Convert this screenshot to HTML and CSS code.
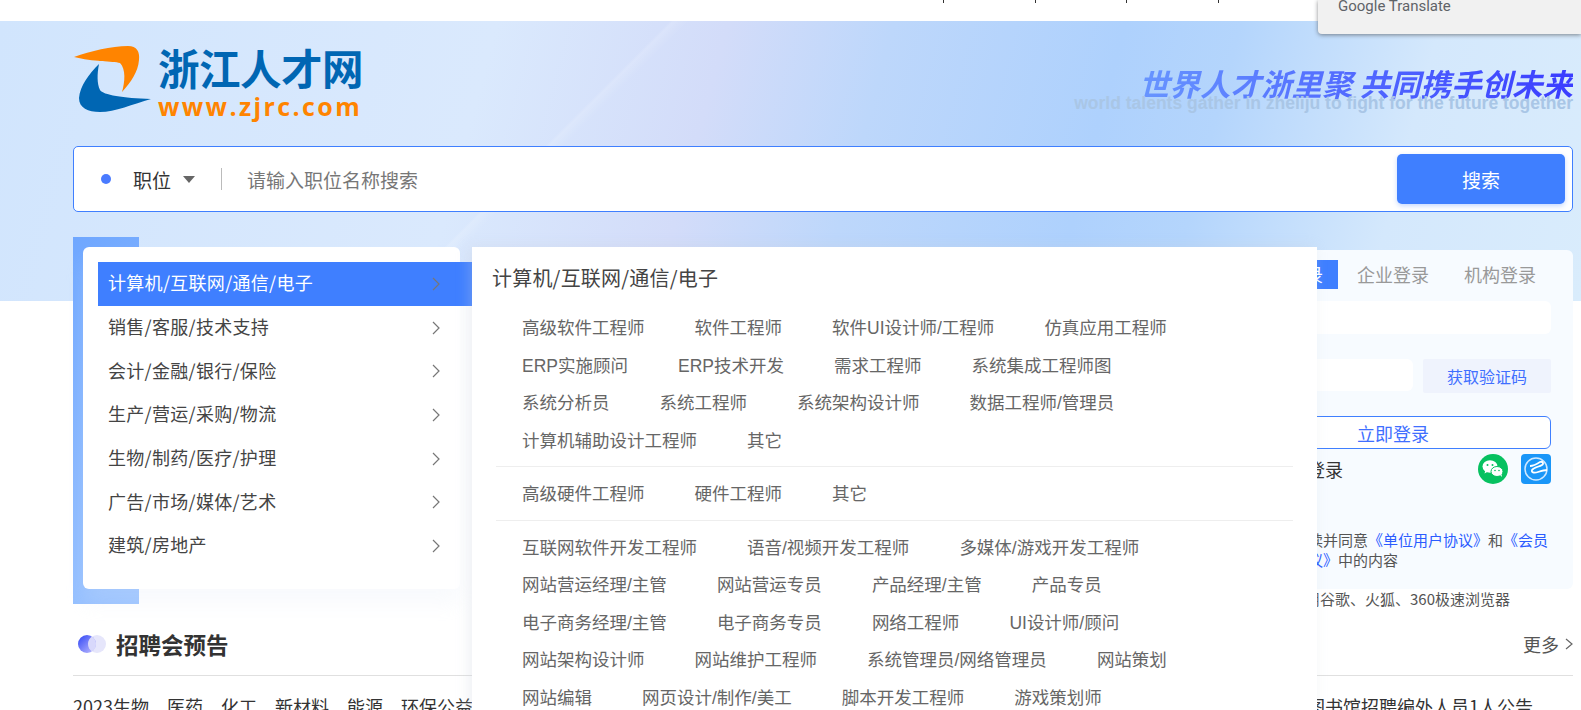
FILE: index.html
```html
<!DOCTYPE html>
<html lang="zh-CN">
<head>
    <meta charset="UTF-8">
    <title>浙江人才网</title>
    <link rel="stylesheet" href="styles.css">
</head>
<body>
<div class="topbar">
    <span class="tick"></span><span class="tick"></span><span class="tick"></span><span class="tick"></span>
</div>
<div class="translate-pop">Google Translate</div>

<!-- 顶部背景区 -->
<div class="hero">
    <div class="header">
        <a class="logo">
            <svg class="logo-mark" viewBox="0 0 80 66">
                <path fill="#ff8400" d="M1 11C18 5 38 0 55 0C64 0 67 6 66 14C65 26 58 36 49 46C52 36 53 23 47 17C40 15 20 16 1 11Z"/>
                <path fill="#0066b3" d="M26 18C24 28 24 38 27 44C30 49 50 52 78 53C60 58 42 66 27 66C15 66 6 62 6 52C7 40 16 28 26 18Z"/>
            </svg>
            <div class="logo-text">
                <div class="logo-cn">浙江人才网</div>
                <div class="logo-en">www.zjrc.com</div>
            </div>
        </a>
        <div class="slogan">
            <div class="slogan-cn">世界人才浙里聚 共同携手创未来</div>
            <div class="slogan-en">world talents gather in zheliju to fight for the future together</div>
        </div>
    </div>
    <form class="search-box">
        <span class="search-dot"></span>
        <span class="search-type">职位</span>
        <span class="search-caret"></span>
        <span class="search-line"></span>
        <input class="search-input" type="text" placeholder="请输入职位名称搜索">
        <button type="button" class="search-btn">搜索</button>
    </form>
</div>

<div class="main">
    <div class="top-row">
        <!-- 职位分类 -->
        <div class="cate-wrap">
            <ul class="cate-list">
                <li class="cate-item active">计算机/互联网/通信/电子<svg class="arrow" viewBox="0 0 8 14"><path d="M1 1l6 6-6 6"/></svg></li>
                <li class="cate-item">销售/客服/技术支持<svg class="arrow" viewBox="0 0 8 14"><path d="M1 1l6 6-6 6"/></svg></li>
                <li class="cate-item">会计/金融/银行/保险<svg class="arrow" viewBox="0 0 8 14"><path d="M1 1l6 6-6 6"/></svg></li>
                <li class="cate-item">生产/营运/采购/物流<svg class="arrow" viewBox="0 0 8 14"><path d="M1 1l6 6-6 6"/></svg></li>
                <li class="cate-item">生物/制药/医疗/护理<svg class="arrow" viewBox="0 0 8 14"><path d="M1 1l6 6-6 6"/></svg></li>
                <li class="cate-item">广告/市场/媒体/艺术<svg class="arrow" viewBox="0 0 8 14"><path d="M1 1l6 6-6 6"/></svg></li>
                <li class="cate-item">建筑/房地产<svg class="arrow" viewBox="0 0 8 14"><path d="M1 1l6 6-6 6"/></svg></li>
            </ul>
        </div>

        <!-- 登录框 -->
        <div class="login-col">
            <div class="login-box">
                <div class="login-tabs">
                    <span class="login-tab active">个人登录</span>
                    <span class="login-tab">企业登录</span>
                    <span class="login-tab">机构登录</span>
                </div>
                <div class="login-field"></div>
                <div class="code-row">
                    <div class="login-field code-field"></div>
                    <button type="button" class="code-btn">获取验证码</button>
                </div>
                <button type="button" class="login-btn">立即登录</button>
                <div class="other-row">
                    <span class="other-text">其他方式登录</span>
                    <svg class="other-icon wechat" viewBox="0 0 30 30">
                        <circle cx="15" cy="15" r="15" fill="#07c160"/>
                        <ellipse cx="12" cy="12.5" rx="7.5" ry="6.2" fill="#fff"/>
                        <path fill="#fff" d="M7.5 16l-1 3.5 3.5-2z"/>
                        <ellipse cx="19" cy="17.5" rx="6" ry="5" fill="#fff" stroke="#07c160"/>
                        <path fill="#fff" d="M22 21l2 2-.5-3z"/>
                        <circle cx="9.5" cy="11" r="1" fill="#07c160"/>
                        <circle cx="14.5" cy="11" r="1" fill="#07c160"/>
                        <circle cx="17" cy="16.5" r=".8" fill="#07c160"/>
                        <circle cx="21" cy="16.5" r=".8" fill="#07c160"/>
                    </svg>
                    <svg class="other-icon" viewBox="0 0 30 30">
                        <rect width="30" height="30" rx="4" fill="#1a96f8"/>
                        <circle cx="15" cy="15" r="11" fill="none" stroke="#cfe8ff" stroke-width="1.5"/>
                        <path fill="none" stroke="#fff" stroke-width="1.8" d="M9 12c4 0 7-2 10-4c3-1 4 2 2 3c-3 2-8 2-10 5c-1 3 3 3 6 2c3-1 6-2 9-2"/>
                    </svg>
                </div>
                <p class="agree">阅读并同意<a>《单位用户协议》</a>和<a>《会员协议》</a>中的内容</p>
            </div>
            <p class="browser-tip">推荐使用谷歌、火狐、360极速浏览器</p>
        </div>
    </div>

    <!-- 招聘会预告 -->
    <div class="sec-head">
        <svg class="sec-icon" viewBox="0 0 28 18">
            <defs>
                <linearGradient id="sg1" x1="0" y1="0" x2="1" y2="1">
                    <stop offset="0" stop-color="#2f45f5"/>
                    <stop offset="1" stop-color="#c5c2ff"/>
                </linearGradient>
            </defs>
            <circle cx="19" cy="9" r="9" fill="#e6e6fb"/>
            <circle cx="9" cy="9" r="9" fill="url(#sg1)"/>
            <path fill="#d8d8fb" d="M14 1.5a9 9 0 0 1 0 15a9 9 0 0 1 0-15z"/>
        </svg>
        <h3 class="sec-title">招聘会预告</h3>
        <a class="more">更多<svg class="more-arrow" viewBox="0 0 8 14"><path d="M1 2l6 5-6 5"/></svg></a>
    </div>
    <div class="news-row">
        <span>2023生物、医药、化工、新材料、能源、环保公益招聘会</span>
        <span>杭州市临安区图书馆招聘编外人员1人公告</span>
    </div>
</div>

<!-- 分类展开层 -->
<div class="cate-panel">
    <div class="panel-title">计算机/互联网/通信/电子</div>
    <div class="panel-group">
        <a>高级软件工程师</a><a>软件工程师</a><a>软件UI设计师/工程师</a><a>仿真应用工程师</a>
        <a>ERP实施顾问</a><a>ERP技术开发</a><a>需求工程师</a><a>系统集成工程师图</a>
        <a>系统分析员</a><a>系统工程师</a><a>系统架构设计师</a><a>数据工程师/管理员</a>
        <a>计算机辅助设计工程师</a><a>其它</a>
    </div>
    <div class="panel-group">
        <a>高级硬件工程师</a><a>硬件工程师</a><a>其它</a>
    </div>
    <div class="panel-group">
        <a>互联网软件开发工程师</a><a>语音/视频开发工程师</a><a>多媒体/游戏开发工程师</a>
        <a>网站营运经理/主管</a><a>网站营运专员</a><a>产品经理/主管</a><a>产品专员</a>
        <a>电子商务经理/主管</a><a>电子商务专员</a><a>网络工程师</a><a>UI设计师/顾问</a>
        <a>网站架构设计师</a><a>网站维护工程师</a><a>系统管理员/网络管理员</a><a>网站策划</a>
        <a>网站编辑</a><a>网页设计/制作/美工</a><a>脚本开发工程师</a><a>游戏策划师</a>
    </div>
</div>
</body>
</html>
```
FILE: styles.css
```css
html, body {
    height: 710px;
    overflow: hidden;
}

body {
    margin: 0;
    position: relative;
    background: #fff;
    color: #333;
    font-family: "Noto Sans CJK SC", "Liberation Sans", sans-serif;
    font-size: 18px;
}

/* 顶部白条 */
.topbar {
    height: 21px;
    display: flex;
    padding-left: 943px;
    gap: 90.5px;
}

.tick {
    width: 1px;
    height: 3px;
    background: #333;
}

.translate-pop {
    position: absolute;
    top: 0;
    left: 1318px;
    right: 0;
    height: 34px;
    box-sizing: border-box;
    padding-left: 20px;
    background: #f1f1f1;
    border-radius: 0 0 0 4px;
    box-shadow: 0 1px 4px rgba(60, 64, 67, 0.6);
    color: #5f6368;
    font-family: Roboto, sans-serif;
    font-size: 15px;
    line-height: 13px;
    z-index: 20;
}

/* 背景区 */
.hero {
    height: 280px;
    box-sizing: border-box;
    padding: 25px 8px 0 73px;
    background:
        linear-gradient(135deg, transparent 36%, rgba(255, 255, 255, 0.15) 36.2%, transparent 37%),
        linear-gradient(105deg, #d1e5fd 0%, #dae9fd 30%, #d3dcf9 44%, #bdd7fb 54%, #aed1fd 68%, #b4d5fc 75%, #d4e8fc 87%, #d9ecfc 100%);
}

.header {
    display: flex;
    justify-content: space-between;
    height: 100px;
}

.logo {
    display: flex;
    gap: 5px;
}

.logo-mark {
    width: 80px;
    height: 66px;
}

.logo-cn {
    margin-top: -5px;
    font-size: 41.5px;
    line-height: 52px;
    font-weight: 700;
    color: #0066b3;
    letter-spacing: -0.5px;
}

.logo-en {
    margin-top: -1px;
    font-family: "Open Sans", sans-serif;
    font-size: 25px;
    line-height: 28px;
    font-weight: 700;
    color: #ff8400;
    letter-spacing: 2.4px;
}

.slogan {
    text-align: right;
    margin-top: 18px;
}

.slogan-cn {
    font-size: 30.5px;
    line-height: 38px;
    font-weight: 700;
    font-style: italic;
    background: linear-gradient(90deg, #6ea2ff, #3a3dff);
    -webkit-background-clip: text;
    background-clip: text;
    color: transparent;
}

.slogan-en {
    margin-top: -9px;
    font-family: "Liberation Sans", sans-serif;
    font-size: 17.5px;
    line-height: 20px;
    font-weight: 700;
    color: #a9c6e6;
}

/* 搜索框 */
.search-box {
    height: 66px;
    box-sizing: border-box;
    display: flex;
    align-items: center;
    padding: 0 7px 0 27px;
    background: #fff;
    border: 1px solid #3f7fff;
    border-radius: 5px;
    font-size: 19px;
}

.search-dot {
    width: 10px;
    height: 10px;
    border-radius: 50%;
    background: #4a7bff;
}

.search-type {
    margin-left: 22px;
    color: #333;
}

.search-caret {
    margin-left: 12px;
    border-style: solid;
    border-width: 7px 6px 0;
    border-color: #666 transparent transparent;
}

.search-line {
    width: 1px;
    height: 22px;
    margin-left: 26px;
    background: #bbb;
}

.search-input {
    flex: 1;
    margin-left: 25px;
    border: 0;
    outline: 0;
    padding: 0;
    font: inherit;
    background: transparent;
}

.search-input::placeholder {
    color: #777;
}

.search-btn {
    width: 168px;
    height: 50px;
    border: 0;
    border-radius: 5px;
    background: #3f7fff;
    box-shadow: 0 2px 5px rgba(63, 127, 255, 0.3);
    color: #fff;
    font: inherit;
}

/* 主体 */
.main {
    margin: -64px 8px 0 73px;
}

.top-row {
    display: flex;
    justify-content: space-between;
    height: 367px;
}

.cate-wrap {
    width: 387px;
    height: 367px;
    box-sizing: border-box;
    padding: 10px 0 0 10px;
    background:
        linear-gradient(135deg, #6fa7ff, #9cc4ff) 0 0 / 66px 100% no-repeat;
}

.cate-list {
    height: 342px;
    box-sizing: border-box;
    margin: 0;
    padding: 15px 0 0 15px;
    list-style: none;
    background: #fff;
    border-radius: 6px;
    box-shadow: 0 15px 20px rgba(220, 228, 245, 0.2);
}

.cate-item {
    height: 43.7px;
    box-sizing: border-box;
    display: flex;
    align-items: center;
    justify-content: space-between;
    padding: 0 20px 3px 10px;
    color: #444;
    letter-spacing: 0.3px;
}

.cate-item.active {
    width: 374px;
    padding-right: 32px;
    background: #3f7fff;
    color: #fff;
}

.arrow {
    width: 8px;
    height: 14px;
    margin-top: 3px;
    fill: none;
    stroke: #777;
    stroke-width: 1.2;
}

.login-col {
    width: 380px;
    margin-top: 13px;
}

.login-box {
    height: 339px;
    box-sizing: border-box;
    padding: 10px 22px 0 42px;
    background: #f7fbff;
    border-radius: 6px;
}

.login-tabs {
    display: flex;
    justify-content: flex-end;
    gap: 5px;
    height: 29px;
}

.login-tab {
    padding: 0 15px;
    line-height: 29px;
    color: #999;
}

.login-tab.active {
    margin-right: -1px;
    background: #3f7fff;
    color: #fff;
}

.login-field {
    height: 33px;
    margin-top: 12px;
    background: #fff;
    border-radius: 6px;
}

.code-row {
    display: flex;
    justify-content: space-between;
    margin-top: 25px;
}

.code-field {
    flex: 1;
    margin-top: 0;
    height: 32px;
    margin-right: 10px;
}

.code-btn {
    width: 128px;
    height: 34px;
    border: 0;
    border-radius: 2px;
    background: #eff3fd;
    color: #3f6fff;
    font: inherit;
    font-size: 16px;
}

.login-btn {
    display: block;
    width: 100%;
    height: 33px;
    margin-top: 23px;
    padding: 0;
    background: #fff;
    border: 1px solid #3f7fff;
    border-radius: 6px;
    color: #3f6fff;
    font: inherit;
    line-height: 28px;
}

.other-row {
    display: flex;
    align-items: center;
    margin-top: 5px;
}

.other-text {
    flex: 1;
    color: #333;
    font-size: 18px;
}

.other-icon {
    width: 30px;
    height: 30px;
    margin-left: 13px;
}

.agree {
    margin: 46px 0 0 58px;
    font-size: 15px;
    line-height: 20px;
    color: #555;
}

.agree a {
    color: #2b5cff;
}

.browser-tip {
    margin: 0 0 0 67px;
    font-size: 15px;
    line-height: 20px;
    color: #555;
}

/* 招聘会预告 */
.sec-head {
    display: flex;
    align-items: center;
    height: 72px;
    box-sizing: border-box;
    padding-top: 8px;
    border-bottom: 1px solid #e0e0e0;
}

.sec-icon {
    width: 28px;
    height: 18px;
    margin-left: 5px;
}

.sec-title {
    flex: 1;
    margin: 0 0 0 10px;
    font-size: 22.5px;
    font-weight: 700;
    color: #333;
}

.more {
    display: flex;
    align-items: center;
    gap: 6px;
    color: #555;
}

.more-arrow {
    width: 8px;
    height: 14px;
    fill: none;
    stroke: #666;
    stroke-width: 1.2;
}

.news-row {
    display: flex;
    justify-content: space-between;
    padding: 17px 40px 0 0;
    color: #333;
}

/* 分类展开层 */
.cate-panel {
    position: absolute;
    top: 247px;
    left: 472px;
    width: 845px;
    height: 463px;
    box-sizing: border-box;
    padding: 15px 24px 0 20px;
    overflow: hidden;
    background: #fff;
    box-shadow: -3px 0 12px rgba(200, 205, 220, 0.3);
    z-index: 10;
}

.panel-title {
    font-size: 20px;
    line-height: 32px;
    letter-spacing: 0.2px;
    color: #444;
}

.panel-group {
    display: flex;
    flex-wrap: wrap;
    column-gap: 50px;
    padding: 0 72px 6px 26px;
    margin: 16px 0 0 4px;
    border-bottom: 1px solid #eee;
    font-family: "Liberation Sans", "Noto Sans CJK SC", sans-serif;
    font-size: 17.5px;
}

.panel-group + .panel-group {
    margin-top: 9px;
}

.panel-group:last-child {
    border-bottom: 0;
}

.panel-group a {
    line-height: 37.5px;
    color: #666;
}
```
